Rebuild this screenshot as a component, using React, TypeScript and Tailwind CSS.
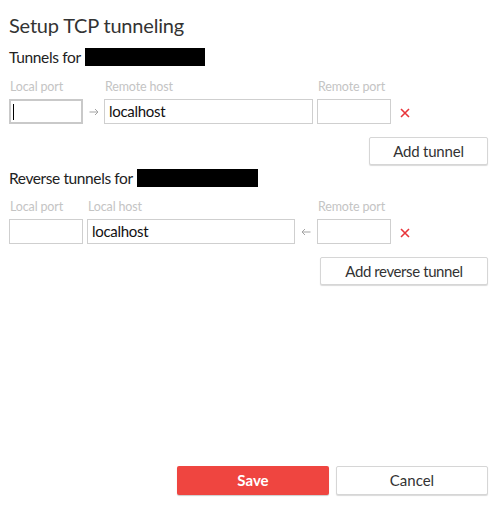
import React from "react";

const font = { fontFamily: 'Lato, "Open Sans", sans-serif' };

function XIcon() {
  return (
    <svg width="10" height="10" viewBox="0 0 10 10" className="block">
      <path d="M1 1 L9 9 M9 1 L1 9" stroke="#e8343a" strokeWidth="1.6" />
    </svg>
  );
}

function ArrowRight() {
  return (
    <svg width="10" height="8" viewBox="0 0 10 8" className="block">
      <path d="M0.5 4 H9 M6 1 L9 4 L6 7" stroke="#a3a3a3" strokeWidth="1" fill="none" />
    </svg>
  );
}

function ArrowLeft() {
  return (
    <svg width="10" height="8" viewBox="0 0 10 8" className="block">
      <path d="M9.5 4 H1 M4 1 L1 4 L4 7" stroke="#a3a3a3" strokeWidth="1" fill="none" />
    </svg>
  );
}

export default function App() {
  return (
    <div className="w-[499px] h-[507px] bg-white flex flex-col pl-[9px] pr-[11px] text-[#333]" style={font}>
      <h1 className="text-[20px] leading-[24px] mt-[13px] tracking-[-0.2px] text-[#333]">Setup TCP tunneling</h1>
      <div className="flex items-center mt-[11px] h-[18px]">
        <span className="text-[15.5px] leading-[18px] tracking-[-0.35px] text-[#222]">Tunnels for</span>
        <span className="ml-[4px] w-[120px] h-[18px] bg-black" />
      </div>
      <div className="flex mt-[13px] h-[16px] text-[12.5px] leading-[16px] tracking-[-0.15px] text-[#c4c4c4]">
        <span className="w-[96px] pl-[1px]">Local port</span>
        <span className="w-[213px]">Remote host</span>
        <span>Remote port</span>
      </div>
      <div className="flex items-center mt-[4px]">
        <div className="w-[74px] h-[25px] border-2 border-[#c9c9c9] flex items-center pl-[2px]">
          <span className="w-[1px] h-[16px] bg-black" />
        </div>
        <div className="w-[21px] flex justify-center"><ArrowRight /></div>
        <div className="w-[209px] h-[25px] border border-[#cfcfcf] flex items-center px-[4px] text-[15px] tracking-[-0.3px] text-[#111]">localhost</div>
        <div className="ml-[4px] w-[74px] h-[25px] border border-[#cfcfcf]" />
        <div className="ml-[9px] mt-[2px]"><XIcon /></div>
      </div>
      <div className="flex justify-end mt-[13px]">
        <button className="w-[119px] h-[28px] bg-white border border-[#d6d6d6] rounded-[2px] shadow-[0_1px_1px_rgba(0,0,0,0.15)] text-[15px] tracking-[-0.2px] text-[#333]">Add tunnel</button>
      </div>
      <div className="flex items-center mt-[4px] h-[18px]">
        <span className="text-[15.5px] leading-[18px] tracking-[-0.4px] text-[#222]">Reverse tunnels for</span>
        <span className="ml-[4px] w-[121px] h-[18px] bg-black" />
      </div>
      <div className="flex mt-[12px] h-[16px] text-[12.5px] leading-[16px] tracking-[-0.15px] text-[#c4c4c4]">
        <span className="w-[79px] pl-[1px]">Local port</span>
        <span className="w-[230px]">Local host</span>
        <span>Remote port</span>
      </div>
      <div className="flex items-center mt-[4px]">
        <div className="w-[74px] h-[25px] border border-[#cfcfcf]" />
        <div className="ml-[4px] w-[208px] h-[25px] border border-[#cfcfcf] flex items-center px-[4px] text-[15px] tracking-[-0.3px] text-[#111]">localhost</div>
        <div className="w-[22px] flex justify-center"><ArrowLeft /></div>
        <div className="w-[74px] h-[25px] border border-[#cfcfcf]" />
        <div className="ml-[9px] mt-[2px]"><XIcon /></div>
      </div>
      <div className="flex justify-end mt-[13px]">
        <button className="w-[168px] h-[28px] bg-white border border-[#d6d6d6] rounded-[2px] shadow-[0_1px_1px_rgba(0,0,0,0.15)] text-[15px] tracking-[-0.4px] text-[#333]">Add reverse tunnel</button>
      </div>
      <div className="flex-1" />
      <div className="flex justify-end gap-[7px] mb-[12px]">
        <button className="w-[152px] h-[29px] bg-[#ef4540] rounded-[2px] shadow-[0_1px_1px_rgba(0,0,0,0.2)] text-[15px] font-bold text-white">Save</button>
        <button className="w-[152px] h-[29px] bg-white border border-[#d6d6d6] rounded-[2px] shadow-[0_1px_1px_rgba(0,0,0,0.15)] text-[15px] text-[#333]">Cancel</button>
      </div>
    </div>
  );
}
